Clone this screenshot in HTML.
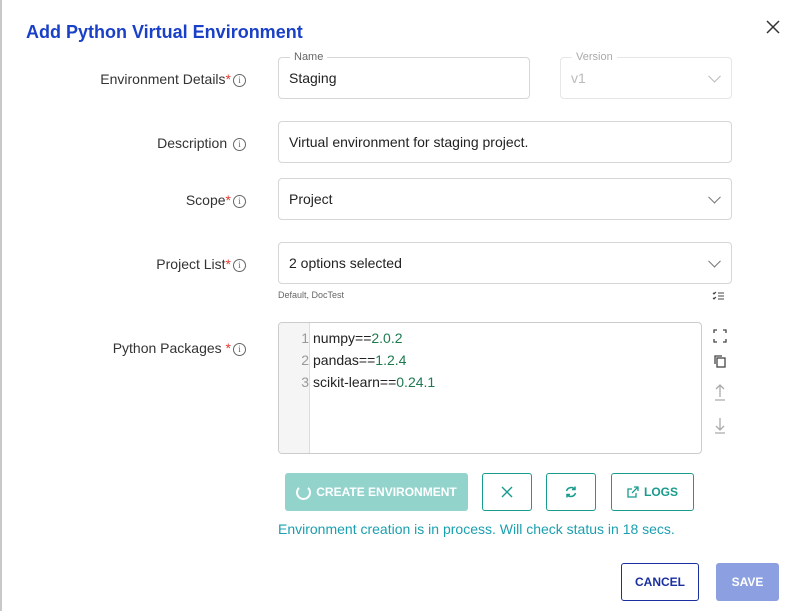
<!DOCTYPE html><html><head><style>
body{margin:0;width:796px;height:611px;background:#fff;font-family:"Liberation Sans",Arial,sans-serif;position:relative;overflow:hidden;color:#333}
.a{position:absolute}
.lbl{position:absolute;right:550px;font-size:14px;color:#333;white-space:nowrap}
.lbl .s{color:#e53935}
.i{display:inline-block;width:11px;height:11px;border:1px solid #666;border-radius:50%;font-size:9px;line-height:11px;text-align:center;color:#666;vertical-align:1px;margin-left:2px;font-family:"Liberation Serif",serif}
.f{position:absolute;border:1px solid #d6d6d6;border-radius:4px;box-sizing:border-box;font-size:14px;color:#222;padding-left:10px}
.chev{position:absolute;right:12px;top:50%;width:8px;height:8px;border-right:1.2px solid #777;border-bottom:1.2px solid #777;transform:translateY(-70%) rotate(45deg)}
.btn{position:absolute;box-sizing:border-box;border:1.5px solid #199c8c;border-radius:3px;color:#199c8c;font-size:12px;font-weight:bold;display:flex;align-items:center;justify-content:center}
.g{color:#1d7a4f}
</style></head><body>
<div class="a" style="left:0;top:0;width:2px;height:611px;background:#c8c8c8"></div>
<div class="a" style="left:26px;top:22px;font-size:18px;font-weight:bold;color:#1a40c8">Add Python Virtual Environment</div>
<svg class="a" style="left:766px;top:20px" width="14" height="14" stroke="#333" stroke-width="1.5"><path d="M1 1L13 13M13 1L1 13"/></svg>

<div class="lbl" style="top:71px">Environment Details<span class="s">*</span><span class="i">i</span></div>
<div class="f" style="left:278px;top:57px;width:252px;height:42px;line-height:40px">Staging</div>
<div class="a" style="left:290px;top:51px;background:#fff;padding:0 4px;font-size:11px;color:#666">Name</div>
<div class="f" style="left:560px;top:57px;width:172px;height:42px;line-height:40px;color:#bbb;border-color:#e6e6e6">v1<div class="chev" style="border-color:#bbb"></div></div>
<div class="a" style="left:572px;top:51px;background:#fff;padding:0 4px;font-size:11px;color:#aaa">Version</div>

<div class="lbl" style="top:135px">Description <span class="i">i</span></div>
<div class="f" style="left:278px;top:121px;width:454px;height:42px;line-height:40px">Virtual environment for staging project.</div>

<div class="lbl" style="top:192px">Scope<span class="s">*</span><span class="i">i</span></div>
<div class="f" style="left:278px;top:178px;width:454px;height:42px;line-height:40px">Project<div class="chev"></div></div>

<div class="lbl" style="top:256px">Project List<span class="s">*</span><span class="i">i</span></div>
<div class="f" style="left:278px;top:242px;width:454px;height:42px;line-height:40px">2 options selected<div class="chev"></div></div>
<div class="a" style="left:278px;top:290px;font-size:9px;color:#666">Default, DocTest</div>
<svg class="a" style="left:712px;top:291px" width="12" height="10" stroke="#444" stroke-width="1"><path d="M1 2l1 1 2-2M1 7l1 1 2-2M6 2h6M6 5h6M6 8h6"/></svg>

<div class="lbl" style="top:340px">Python Packages <span class="s">*</span><span class="i">i</span></div>
<div class="a" style="left:278px;top:322px;width:424px;height:132px;border:1px solid #ccc;border-radius:4px;box-sizing:border-box;overflow:hidden;font-size:14px;line-height:22px">
<div class="a" style="left:0;top:0;width:30px;height:132px;background:#f5f5f5;border-right:1px solid #ddd"></div>
<div class="a" style="left:0;top:4px;width:30px;text-align:right;color:#999">1<br>2<br>3</div>
<div class="a" style="left:34px;top:4px;color:#222">numpy==<span class="g">2.0.2</span><br>pandas==<span class="g">1.2.4</span><br>scikit-learn==<span class="g">0.24.1</span></div>
</div>
<svg class="a" style="left:712px;top:328px" width="16" height="110" fill="none" stroke="#444" stroke-width="1.3">
<path d="M2 5V2h3M11 2h3v3M14 11v3h-3M5 14H2v-3"/>
<rect x="5" y="30" width="8" height="9"/><path d="M3 36V28h7"/>
<path d="M8 57v12M4 61l4-4 4 4M3 72h10" stroke="#aaa"/>
<path d="M8 90v12M4 98l4 4 4-4M3 105h10" stroke="#aaa"/>
</svg>

<div class="a" style="left:285px;top:473px;width:183px;height:38px;background:#92d3cb;border-radius:3px;color:#fff;font-size:12px;font-weight:bold;display:flex;align-items:center;justify-content:center"><span style="display:inline-block;width:11px;height:11px;border:2px solid #fff;border-top-color:transparent;border-radius:50%;margin-right:5px"></span>CREATE ENVIRONMENT</div>
<div class="btn" style="left:482px;top:473px;width:50px;height:38px"><svg width="12" height="12" stroke="#199c8c" stroke-width="1.4"><path d="M1 1L11 11M11 1L1 11"/></svg></div>
<div class="btn" style="left:546px;top:473px;width:50px;height:38px"><svg width="14" height="14" fill="none" stroke="#199c8c" stroke-width="1.5"><path d="M2.5 6A4.8 4.8 0 0 1 11 4.5M11.5 8A4.8 4.8 0 0 1 3 9.5M11 1.5v3h-3M3 12.5v-3h3"/></svg></div>
<div class="btn" style="left:611px;top:473px;width:83px;height:38px"><svg width="12" height="12" fill="none" stroke="#199c8c" stroke-width="1.3" style="margin-right:5px"><path d="M9 7v4H1V3h4M7 1h4v4M11 1L5 7"/></svg>LOGS</div>
<div class="a" style="left:278px;top:521px;font-size:14px;color:#1a9fb0">Environment creation is in process. Will check status in 18 secs.</div>

<div class="a" style="left:621px;top:563px;width:78px;height:38px;box-sizing:border-box;border:1.5px solid #1a2fa0;border-radius:3px;color:#1a2fa0;font-size:12px;font-weight:bold;display:flex;align-items:center;justify-content:center">CANCEL</div>
<div class="a" style="left:716px;top:563px;width:63px;height:38px;background:#8c9fe0;border-radius:3px;color:#fff;font-size:12px;font-weight:bold;display:flex;align-items:center;justify-content:center">SAVE</div>
</body></html>
